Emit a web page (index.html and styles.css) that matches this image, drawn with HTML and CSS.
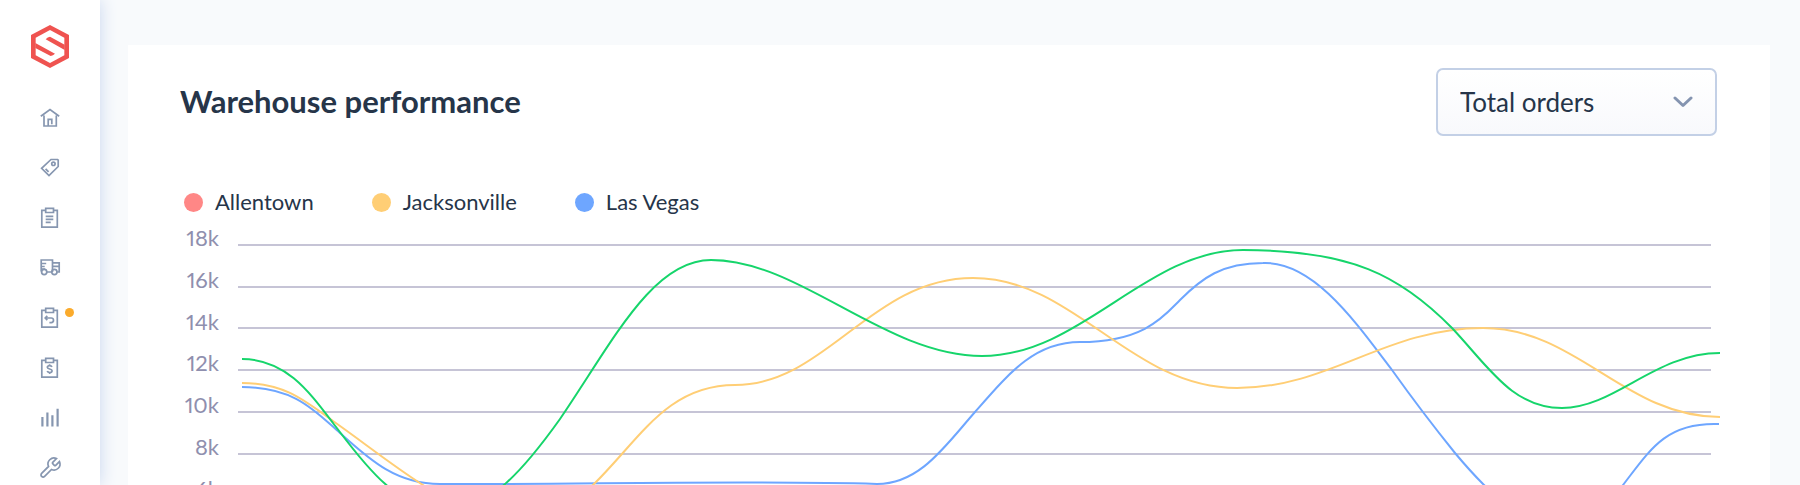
FILE: index.html
```html
<!DOCTYPE html>
<html lang="en">
<head>
  <meta charset="UTF-8">
  <meta name="viewport" content="width=device-width, initial-scale=1">
  <title>Warehouse performance</title>
  <link rel="stylesheet" href="styles.css">
</head>
<body>

  <!-- Sidebar -->
  <aside class="sidebar">
    <a class="logo" href="#" aria-label="Dashboard">
      <svg viewBox="93 75 114 129" width="38" height="43">
        <path fill="#ef5350" d="M150 75l57 30v69l-57 30-57-30v-69z"/>
        <path fill="#fff" d="M150 90l43 23v53l-43 23-43-23v-53z"/>
        <path fill="#ef5350" d="M137 118q6-7 13-8l44 24v16zM165 161q-6 6-13 7l-46-24v-15z"/>
      </svg>
    </a>
    <nav class="nav">
      <a href="#" aria-label="Home">
        <svg class="icon" viewBox="0 0 20 20"><path d="M.8 8.3L10 1.6l9.2 6.7M4 7.5V18h12.3V7.5M8.2 17.5v-6.2h3.6v5"/></svg>
      </a>
      <a href="#" aria-label="Products">
        <svg class="icon" viewBox="0 0 20 20"><path d="M11 1.5h6.5l.7.7v6.3L9 17.5 1.6 10.3zM5.6 10.8l3 3"/><circle cx="13.4" cy="5.8" r="1.7"/></svg>
      </a>
      <a href="#" aria-label="Orders">
        <svg class="icon" viewBox="0 0 20 20"><path d="M5.5 2.3H1.8v16.9h15.5V2.3h-3.8M5.7.3h7.8v4.2H5.7zM5.7 8.3h7.6M5.7 11.3h7.6M5.7 14.3h5"/></svg>
      </a>
      <a href="#" aria-label="Shipments">
        <svg class="icon" viewBox="0 0 20 20"><path d="M1.2 13.5V2h11.3v12M1.2 5.5h5M1.2 8.5h3.5M1.2 11h4M6.8 14h4.7M12.5 4.8h6.7V14h-2M13 8.3h6"/><circle cx="4.2" cy="14" r="2.6"/><circle cx="14.4" cy="14" r="2.6"/></svg>
      </a>
      <a href="#" aria-label="Returns">
        <svg class="icon" viewBox="0 0 20 20"><path d="M5.5 2.3H1.8v16.9h15.5V2.3h-3.8M5.7.3h7.8v4.2H5.7zM7.3 7.8L5.2 10l2.1 2.2M5.4 10h5.8a2.3 2.3 0 0 1 0 4.6H9.4"/></svg>
        <span class="nav-dot"></span>
      </a>
      <a href="#" aria-label="Billing">
        <svg class="icon" viewBox="0 0 20 20"><path d="M5.5 2.3H1.8v16.9h15.5V2.3h-3.8M5.7.3h7.8v4.2H5.7zM12 8.9c-.4-.9-1.3-1.3-2.4-1.3-1.4 0-2.3.7-2.3 1.7 0 2.3 4.8 1.1 4.8 3.5 0 1-.9 1.7-2.4 1.7-1.3 0-2.2-.5-2.5-1.4M9.6 6.3v1.3M9.6 14.5v1.4"/></svg>
      </a>
      <a href="#" aria-label="Analytics">
        <svg class="icon icon-bars" viewBox="0 0 20 20"><path d="M2.4 9v9.6M7.4 4.6v14M12.4 7.2v11.4M17.6.7v17.9"/></svg>
      </a>
      <a href="#" aria-label="Settings">
        <svg class="icon" viewBox="2 2 20 20"><path d="M14.7 6.3a1 1 0 0 0 0 1.4l1.6 1.6a1 1 0 0 0 1.4 0l3.77-3.77a6 6 0 0 1-7.94 7.94l-6.91 6.91a2.12 2.12 0 0 1-3-3l6.91-6.91a6 6 0 0 1 7.94-7.94l-3.76 3.76z"/></svg>
      </a>
    </nav>
  </aside>

  <!-- Main content -->
  <main class="content">
    <section class="card">
      <header class="card-header">
        <h1>Warehouse performance</h1>
        <div class="select-box">
          <select aria-label="Metric">
            <option>Total orders</option>
          </select>
          <svg class="chevron" viewBox="0 0 20 12"><path d="M2 2l8 7.5L18 2"/></svg>
        </div>
      </header>

      <ul class="legend">
        <li><span class="dot red"></span>Allentown</li>
        <li><span class="dot yellow"></span>Jacksonville</li>
        <li><span class="dot blue"></span>Las Vegas</li>
      </ul>

      <div class="chart">
        <ul class="axis">
          <li>18k</li>
          <li>16k</li>
          <li>14k</li>
          <li>12k</li>
          <li>10k</li>
          <li>8k</li>
          <li>6k</li>
        </ul>
        <svg class="plot" viewBox="238 245 1473 251" preserveAspectRatio="none">
          <path class="grid" d="M238 245H1711M238 287H1711M238 328H1711M238 370H1711M238 412H1711M238 454H1711M238 496H1711"/>
          <path class="line blue" d="M242 387C295 387 315 411 340 433C368 458 395 484 440 484C560 485 740 480 877 484C920 484 945 446 975 412C1010 372 1035 342 1080 342C1145 342 1165 315 1180 300C1202 278 1222 263 1263 263C1313 261 1355 321 1392 370C1412 398 1434 427 1455 453C1465 465 1474 475 1484 485C1510 510 1530 525 1555 525C1585 525 1605 508 1623 485C1650 450 1665 424 1714 424H1719"/>
          <path class="line yellow" d="M242 383C283 383 303 399 333 421C363 442 393 466 423 485C453 505 475 512 497 512C540 512 570 508 593 485C640 439 667 385 735 385C826 385 871 278 973 278C1075 278 1130 388 1237 388C1330 388 1385 328 1483 328C1577 328 1625 417 1720 417"/>
          <path class="line green" d="M242 359C285 359 308 390 333 423C360 458 395 510 445 510C490 510 525 468 560 419C612 343 652 260 711 260C800 260 885 356 982 356C1081 356 1146 250 1243 250C1350 250 1400 275 1452 328C1488 366 1512 408 1562 408C1615 408 1655 353 1720 353"/>
        </svg>
      </div>
    </section>
  </main>

</body>
</html>
```
FILE: styles.css
```css
* {
  box-sizing: border-box;
}
body {
  display: flex;
  height: 100vh;
  margin: 0;
  overflow: hidden;
  background-color: #f8fafc;
  color: #263549;
  font-family: Lato, "Open Sans", sans-serif;
}
ul {
  list-style: none;
  margin: 0;
  padding: 0;
}

/* Sidebar */
.sidebar {
  flex: none;
  width: 100px;
  padding-top: 25px;
  background-color: #fff;
  box-shadow: 0 0 16px #c8d6ee;
}
.logo {
  display: flex;
  justify-content: center;
}
.nav {
  margin-top: 25px;
}
.nav a {
  position: relative;
  display: flex;
  align-items: center;
  justify-content: center;
  height: 50px;
}
.icon {
  width: 20px;
  height: 20px;
  overflow: visible;
  fill: none;
  stroke: #8696b0;
  stroke-width: 1.7;
}
.icon-bars {
  stroke-width: 2.2;
}
.nav-dot {
  position: absolute;
  top: 15px;
  left: 65px;
  width: 9px;
  height: 9px;
  border-radius: 50%;
  background-color: #fbab2c;
}

/* Card */
.content {
  flex: 1;
  padding: 45px 30px 0 28px;
}
.card {
  padding: 23px 53px 40px 52px;
  background-color: #fff;
}
.card-header {
  display: flex;
  align-items: center;
  justify-content: space-between;
}
h1 {
  margin: 0 0 2px;
  font-size: 31px;
  line-height: 36px;
}
.select-box {
  position: relative;
  width: 281px;
}
select {
  appearance: none;
  width: 100%;
  height: 68px;
  padding: 0 22px;
  border: 2px solid #c3d0e6;
  border-radius: 7px;
  background: linear-gradient(#fff, #f8f9fc);
  color: inherit;
  font-family: inherit;
  font-size: 26px;
}
.chevron {
  position: absolute;
  top: 28px;
  right: 24px;
  width: 20px;
  height: 12px;
  fill: none;
  stroke: #8494b0;
  stroke-width: 3;
  stroke-linecap: round;
  stroke-linejoin: round;
  pointer-events: none;
}

/* Legend */
.legend {
  display: flex;
  gap: 58px;
  margin: 54px 0 12px 4px;
  font-size: 22px;
  line-height: 24px;
}
.legend li {
  display: flex;
  align-items: center;
  gap: 12px;
}
.dot {
  width: 19px;
  height: 19px;
  border-radius: 50%;
}
.dot.red {
  background-color: #ff8786;
}
.dot.yellow {
  background-color: #ffce75;
}
.dot.blue {
  background-color: #6ea6ff;
}

/* Chart */
.chart {
  display: flex;
  gap: 19px;
  padding-right: 6px;
}
.axis {
  display: flex;
  flex-direction: column;
  justify-content: space-between;
  width: 39px;
  height: 275px;
  color: #8f8fae;
  font-size: 22px;
  font-variant-numeric: proportional-nums;
  line-height: 24px;
  text-align: right;
}
.plot {
  flex: 1;
  height: 251px;
  margin-top: 19px;
  overflow: visible;
}
.grid,
.line {
  fill: none;
  stroke-width: 2;
  vector-effect: non-scaling-stroke;
}
.grid {
  stroke: #c6c4d6;
}
.line.blue {
  stroke: #6ea6ff;
}
.line.yellow {
  stroke: #ffce75;
}
.line.green {
  stroke: #16d56b;
}
```
